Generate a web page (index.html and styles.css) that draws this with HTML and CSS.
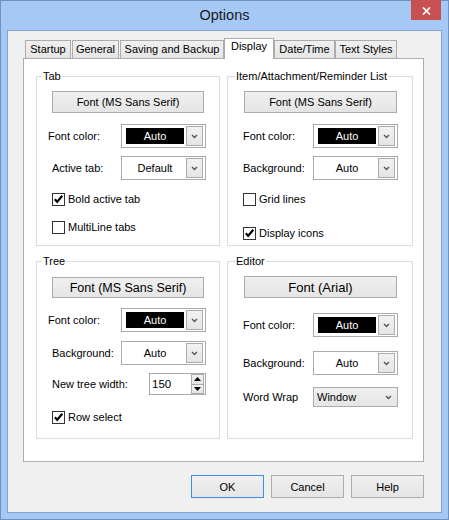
FILE: index.html
```html
<!DOCTYPE html>
<html>
<head>
<meta charset="utf-8">
<title>Options</title>
<link rel="stylesheet" href="styles.css">
</head>
<body>
<div class="window">
  <div class="titlebar">
    <div class="title">Options</div>
    <div class="close">
      <svg width="9" height="8" viewBox="0 0 9 8"><path d="M1 0.5 L8 7.5 M8 0.5 L1 7.5" stroke="#fff" stroke-width="1.7" fill="none"/></svg>
    </div>
  </div>
  <div class="client">
    <div class="tabs">
      <div class="tab w1">Startup</div>
      <div class="tab w2">General</div>
      <div class="tab w3">Saving and Backup</div>
      <div class="tab w4 sel">Display</div>
      <div class="tab w5">Date/Time</div>
      <div class="tab w6">Text Styles</div>
    </div>
    <div class="panel">
      <div class="grid">
        <!-- Tab -->
        <div class="group left">
          <div class="legend">Tab</div>
          <div class="fbtn mt8">Font (MS Sans Serif)</div>
          <div class="row mt11">
            <span class="lbl lbl-fc">Font color:</span>
            <div class="combo"><div class="val swatch">Auto</div><div class="ddb"><svg width="7" height="5" viewBox="0 0 7 5"><path d="M1 1 L3.5 3.5 L6 1" stroke="#555" stroke-width="1.4" fill="none"/></svg></div></div>
          </div>
          <div class="row mt8">
            <span class="lbl">Active tab:</span>
            <div class="combo"><div class="val">Default</div><div class="ddb"><svg width="7" height="5" viewBox="0 0 7 5"><path d="M1 1 L3.5 3.5 L6 1" stroke="#555" stroke-width="1.4" fill="none"/></svg></div></div>
          </div>
          <div class="check mt13"><span class="box"><svg width="11" height="11" viewBox="0 0 11 11"><path d="M1.8 5.2 L4.2 7.8 L9.3 1.8" stroke="#000" stroke-width="2.1" fill="none"/></svg></span><span class="ctext">Bold active tab</span></div>
          <div class="check mt15"><span class="box"></span><span class="ctext">MultiLine tabs</span></div>
        </div>
        <!-- Item list -->
        <div class="group right">
          <div class="legend">Item/Attachment/Reminder List</div>
          <div class="fbtn mt8">Font (MS Sans Serif)</div>
          <div class="row mt11">
            <span class="lbl">Font color:</span>
            <div class="combo"><div class="val swatch">Auto</div><div class="ddb"><svg width="7" height="5" viewBox="0 0 7 5"><path d="M1 1 L3.5 3.5 L6 1" stroke="#555" stroke-width="1.4" fill="none"/></svg></div></div>
          </div>
          <div class="row mt8">
            <span class="lbl">Background:</span>
            <div class="combo"><div class="val">Auto</div><div class="ddb"><svg width="7" height="5" viewBox="0 0 7 5"><path d="M1 1 L3.5 3.5 L6 1" stroke="#555" stroke-width="1.4" fill="none"/></svg></div></div>
          </div>
          <div class="check mt13"><span class="box"></span><span class="ctext">Grid lines</span></div>
          <div class="check mt21"><span class="box"><svg width="11" height="11" viewBox="0 0 11 11"><path d="M1.8 5.2 L4.2 7.8 L9.3 1.8" stroke="#000" stroke-width="2.1" fill="none"/></svg></span><span class="ctext">Display icons</span></div>
        </div>
        <!-- Tree -->
        <div class="group left">
          <div class="legend">Tree</div>
          <div class="fbtn big1 mt9">Font (MS Sans Serif)</div>
          <div class="row mt10">
            <span class="lbl lbl-fc">Font color:</span>
            <div class="combo"><div class="val swatch">Auto</div><div class="ddb"><svg width="7" height="5" viewBox="0 0 7 5"><path d="M1 1 L3.5 3.5 L6 1" stroke="#555" stroke-width="1.4" fill="none"/></svg></div></div>
          </div>
          <div class="row mt9">
            <span class="lbl">Background:</span>
            <div class="combo"><div class="val">Auto</div><div class="ddb"><svg width="7" height="5" viewBox="0 0 7 5"><path d="M1 1 L3.5 3.5 L6 1" stroke="#555" stroke-width="1.4" fill="none"/></svg></div></div>
          </div>
          <div class="row mt8">
            <span class="lbl lbl-wide">New tree width:</span>
            <div class="spin">
              <span class="spinval">150</span>
              <div class="spinbtns">
                <div class="sb"><svg width="7" height="4" viewBox="0 0 7 4"><path d="M0 4 L3.5 0 L7 4 Z" fill="#000"/></svg></div>
                <div class="sb"><svg width="7" height="4" viewBox="0 0 7 4"><path d="M0 0 L3.5 4 L7 0 Z" fill="#000"/></svg></div>
              </div>
            </div>
          </div>
          <div class="check mt16"><span class="box"><svg width="11" height="11" viewBox="0 0 11 11"><path d="M1.8 5.2 L4.2 7.8 L9.3 1.8" stroke="#000" stroke-width="2.1" fill="none"/></svg></span><span class="ctext">Row select</span></div>
        </div>
        <!-- Editor -->
        <div class="group right">
          <div class="legend">Editor</div>
          <div class="fbtn big2 mt8">Font (Arial)</div>
          <div class="row mt15">
            <span class="lbl">Font color:</span>
            <div class="combo"><div class="val swatch">Auto</div><div class="ddb"><svg width="7" height="5" viewBox="0 0 7 5"><path d="M1 1 L3.5 3.5 L6 1" stroke="#555" stroke-width="1.4" fill="none"/></svg></div></div>
          </div>
          <div class="row mt14">
            <span class="lbl">Background:</span>
            <div class="combo"><div class="val">Auto</div><div class="ddb"><svg width="7" height="5" viewBox="0 0 7 5"><path d="M1 1 L3.5 3.5 L6 1" stroke="#555" stroke-width="1.4" fill="none"/></svg></div></div>
          </div>
          <div class="row mt12">
            <span class="lbl">Word Wrap</span>
            <div class="dropdown"><span>Window</span><svg width="7" height="5" viewBox="0 0 7 5"><path d="M1 1 L3.5 3.5 L6 1" stroke="#555" stroke-width="1.4" fill="none"/></svg></div>
          </div>
        </div>
      </div>
    </div>
    <div class="buttons">
      <button class="btn default">OK</button>
      <button class="btn">Cancel</button>
      <button class="btn">Help</button>
    </div>
  </div>
</div>
</body>
</html>
```
FILE: styles.css
```css
* { box-sizing: border-box; }
html, body { margin: 0; padding: 0; }
body {
  width: 449px;
  height: 520px;
  overflow: hidden;
  font-family: "Liberation Sans", Arial, sans-serif;
  font-size: 11px;
  color: #000;
  background: #a5c8f5;
}
.window {
  width: 449px;
  height: 520px;
  border: 1px solid #6f92bf;
  background: #a5c8f5;
  display: flex;
  flex-direction: column;
}
.titlebar {
  height: 29px;
  flex: none;
  display: grid;
  grid-template-columns: 1fr auto 1fr;
  align-items: start;
}
.title {
  grid-column: 2;
  font-size: 14.5px;
  line-height: 29px;
  color: #1a1a1a;
}
.close {
  grid-column: 3;
  justify-self: end;
  width: 30px;
  height: 20px;
  margin: -1px 7px 0 0;
  background: #c75050;
  display: flex;
  align-items: center;
  justify-content: center;
  padding-top: 1px;
}
.close svg { display: block; }
.client {
  flex: 1;
  margin: 0 6px 6px;
  border: 1px solid #87a4c9;
  background: #f0f0f0;
  padding: 7px 17px 0 15px;
  display: flex;
  flex-direction: column;
}
.tabs {
  display: flex;
  align-items: flex-end;
  height: 21px;
  margin: 0 0 -1px 2px;
  position: relative;
  z-index: 1;
}
.tab {
  height: 19px;
  border: 1px solid #acacac;
  background: linear-gradient(#f0f0f0, #e5e5e5);
  text-align: center;
  line-height: 17px;
  white-space: nowrap;
}
.tab.sel {
  height: 21px;
  border-bottom: none;
  background: #fff;
  line-height: 15px;
}
.w1 { width: 46px; }
.w2 { width: 47px; margin-left: 1px; }
.w3 { width: 104px; margin-left: 1px; }
.w4 { width: 50px; }
.w5 { width: 61px; }
.w6 { width: 62px; }
.panel {
  height: 404px;
  border: 1px solid #adadad;
  background: #fff;
  padding: 17px 0 0 12px;
}
.grid {
  display: grid;
  grid-template-columns: 184px 186px;
  grid-template-rows: 170px 178px;
  column-gap: 7px;
  row-gap: 15px;
}
.group {
  border: 1px solid #dcdcdc;
  padding: 0 0 0 15px;
  display: flex;
  flex-direction: column;
  align-items: flex-start;
}
.legend {
  margin: -7px 0 0 -10px;
  padding: 0 1px;
  background: #fff;
  line-height: 13px;
  white-space: nowrap;
}
.right .legend { margin-left: -8px; }
.mt8 { margin-top: 8px; }
.mt9 { margin-top: 9px; }
.mt10 { margin-top: 10px; }
.mt11 { margin-top: 11px; }
.mt12 { margin-top: 12px; }
.mt13 { margin-top: 13px; }
.mt14 { margin-top: 14px; }
.mt15 { margin-top: 15px; }
.mt16 { margin-top: 16px; }
.mt21 { margin-top: 21px; }
.fbtn {
  width: 152px;
  height: 22px;
  border: 1px solid #acacac;
  background: linear-gradient(#f0f0f0, #e5e5e5);
  display: flex;
  align-items: center;
  justify-content: center;
  white-space: nowrap;
}
.right .fbtn { width: 153px; margin-left: 1px; }
.fbtn.big1 { font-size: 12.5px; height: 21px; }
.fbtn.big2 { font-size: 13px; }
.row {
  display: flex;
  align-items: center;
}
.lbl { width: 69px; white-space: nowrap; }
.right .lbl { width: 70px; }
.lbl-fc { width: 73px; margin-left: -4px; }
.lbl-wide { width: 97px; }
.combo {
  width: 85px;
  height: 24px;
  border: 1px solid #ababab;
  background: #fff;
  display: flex;
  align-items: center;
  padding: 0 2px 0 4px;
  gap: 2px;
}
.val {
  width: 58px;
  height: 16px;
  line-height: 16px;
  text-align: center;
}
.swatch { background: #000; color: #fff; }
.ddb {
  width: 17px;
  height: 20px;
  border: 1px solid #acacac;
  background: linear-gradient(#f2f2f2, #e5e5e5);
  display: flex;
  align-items: center;
  justify-content: center;
}
.ddb svg, .dropdown svg, .sb svg { display: block; }
.spin {
  width: 57px;
  height: 22px;
  border: 1px solid #ababab;
  background: #fff;
  display: flex;
  align-items: stretch;
  padding: 0 1px 0 2px;
}
.spinval {
  flex: 1;
  font-size: 11.5px;
  line-height: 20px;
}
.spinbtns {
  width: 13px;
  display: flex;
  flex-direction: column;
}
.sb {
  flex: 1;
  border: 1px solid #acacac;
  background: linear-gradient(#f2f2f2, #e5e5e5);
  display: flex;
  align-items: center;
  justify-content: center;
}
.sb + .sb { border-top: none; }
.dropdown {
  width: 85px;
  height: 20px;
  border: 1px solid #acacac;
  background: linear-gradient(#f0f0f0, #e5e5e5);
  display: flex;
  align-items: center;
  justify-content: space-between;
  padding: 0 5px 0 3px;
}
.check {
  display: flex;
  align-items: center;
  height: 13px;
}
.box {
  width: 13px;
  height: 13px;
  border: 1px solid #333;
  background: #fff;
  display: flex;
  align-items: center;
  justify-content: center;
}
.box svg { display: block; }
.ctext { margin-left: 3px; white-space: nowrap; line-height: 13px; }
.buttons {
  display: flex;
  justify-content: flex-end;
  gap: 7px;
  margin-top: 13px;
}
.btn {
  width: 73px;
  height: 23px;
  border: 1px solid #acacac;
  background: linear-gradient(#f0f0f0, #e5e5e5);
  font-family: inherit;
  font-size: 11px;
  color: #000;
  padding: 0;
  margin: 0;
}
.btn.default { border-color: #3d8ee6; }
```
